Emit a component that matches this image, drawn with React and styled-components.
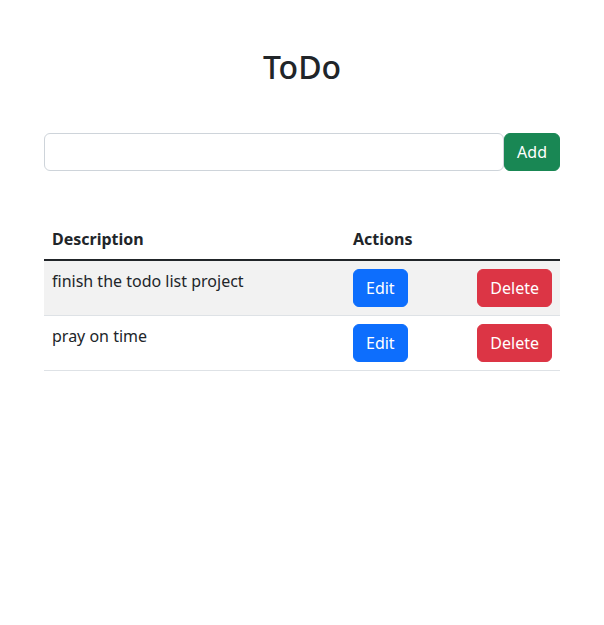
import React, { useState } from 'react';
import styled, { createGlobalStyle, css } from 'styled-components';

const GlobalStyle = createGlobalStyle`
  body {
    margin: 0;
    font-family: "Noto Sans", "Open Sans", sans-serif;
    font-size: 16px;
    line-height: 1.5;
    color: #212529;
    background: #fff;
  }
  * {
    box-sizing: border-box;
  }
`;

const Container = styled.div`
  max-width: 540px;
  margin: 0 auto;
  padding: 0 12px;
`;

const Title = styled.h1`
  margin: 48px 0 47px;
  font-size: 32px;
  font-weight: 500;
  line-height: 1.2;
  text-align: center;
`;

const Form = styled.form`
  display: flex;
  margin-bottom: 48px;
`;

const Input = styled.input`
  flex: 1;
  height: 38px;
  padding: 6px 12px;
  font: inherit;
  color: #212529;
  border: 1px solid #ced4da;
  border-radius: 6px;
  outline: none;
`;

const variants = {
  success: '#198754',
  primary: '#0d6efd',
  danger: '#dc3545',
};

const Button = styled.button`
  height: 38px;
  padding: 6px 12px;
  font: inherit;
  line-height: 1.5;
  color: #fff;
  border: 1px solid ${p => variants[p.variant]};
  background: ${p => variants[p.variant]};
  border-radius: 6px;
  cursor: pointer;
`;

const Table = styled.table`
  width: 100%;
  border-collapse: collapse;
`;

const Th = styled.th`
  padding: 8px;
  text-align: left;
  font-weight: 700;
  border-bottom: 2px solid #212529;
`;

const Row = styled.tr`
  ${p =>
    p.striped &&
    css`
      background: #f2f2f2;
    `};
`;

const Td = styled.td`
  padding: 8px;
  vertical-align: top;
  border-bottom: 1px solid #dee2e6;
`;

const ActionsCell = styled(Td)`
  width: 215px;
`;

const Actions = styled.div`
  display: flex;
  justify-content: space-between;
`;

const App = () => {
  const [todos] = useState(['finish the todo list project', 'pray on time']);
  const [text, setText] = useState('');

  return (
    <>
      <GlobalStyle />
      <Container>
        <Title>ToDo</Title>
        <Form onSubmit={e => e.preventDefault()}>
          <Input value={text} onChange={e => setText(e.target.value)} />
          <Button variant="success" type="submit">
            Add
          </Button>
        </Form>
        <Table>
          <thead>
            <tr>
              <Th>Description</Th>
              <Th>Actions</Th>
            </tr>
          </thead>
          <tbody>
            {todos.map((todo, i) => (
              <Row key={todo} striped={i % 2 === 0}>
                <Td>{todo}</Td>
                <ActionsCell>
                  <Actions>
                    <Button variant="primary">Edit</Button>
                    <Button variant="danger">Delete</Button>
                  </Actions>
                </ActionsCell>
              </Row>
            ))}
          </tbody>
        </Table>
      </Container>
    </>
  );
};

export default App;
